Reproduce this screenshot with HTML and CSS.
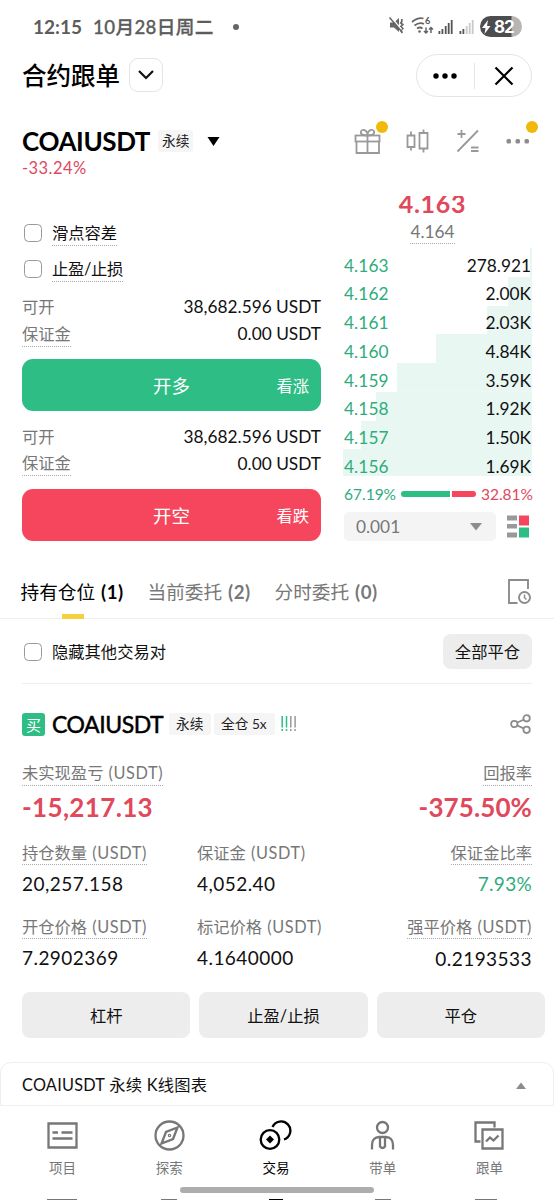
FILE: index.html
```html
<!DOCTYPE html>
<html lang="zh-CN">
<head>
<meta charset="utf-8">
<title>合约跟单</title>
<link rel="stylesheet" href="styles.css">
</head>
<body>
<div class="screen">
  <div class="status">
    <span class="clock">12:15</span><span class="date">10月28日周二</span><i class="status-dot"></i>
    <svg class="status-icons" width="136" height="24" viewBox="0 0 136 24">
      <g fill="#666"><path d="M3 9.500h4l5-4.500v14l-5-4.500H3z"/><path d="M14.800 6v2.500l-1 1.500 2 1.500-2 2 2 2-2 2 1.500 2.500" fill="none" stroke="#666" stroke-width="1.700"/></g>
      <path d="M3.500 3.500l11 13" stroke="#fff" stroke-width="1.500"/><path d="M2.500 4.500l12.500 14.500" stroke="#666" stroke-width="1.500"/>
      <g fill="none" stroke="#666" stroke-width="1.800"><path d="M25 9q6-5 11.500-3.500M27.500 12.500q5-4 9.500-1.500M30 15.500q3-2 5.500 0"/><path d="M39 14.500v5.500M37 18l2 2 2-2M44 20v-5.500M42 16.500l2-2 2 2" stroke-width="1.500"/></g>
      <circle cx="32.500" cy="18.500" r="1.300" fill="#666"/>
      <text x="38" y="11" class="wifi-gen">6</text>
      <g fill="#555"><path d="M51.500 18h1.800v3h-1.800zM54.500 16h1.800v5h-1.800zM57.800 13h1.800v8h-1.800zM60.800 10h1.800v11h-1.800zM63.800 7h1.800v14h-1.800z"/><path d="M72.500 18h1.800v3h-1.800zM75.500 16h1.800v5h-1.800z"/></g>
      <path d="M78.800 13h1.800v8h-1.800zM81.800 10h1.800v11h-1.800zM84.800 7h1.800v14h-1.800z" fill="#c9c9c9"/>
      <path d="M103.500 3h22v21h-22a10.500 10.500 0 0 1 0-21z" fill="#4d4d4d"/><path d="M124.500 3a10.500 10.500 0 0 1 0 21z" fill="#b5b5b5"/>
      <path d="M101 7l-6 8h3.500l-1 6 6-8h-3.500z" fill="#fff"/>
      <text x="107" y="20" class="battery">82</text>
    </svg>
  </div>

  <div class="header">
    <h1>合约跟单</h1>
    <span class="drop"><svg width="18" height="12" viewBox="0 0 18 12"><path d="M2 2l7 7 7-7" fill="none" stroke="#111" stroke-width="2.200"/></svg></span>
    <span class="capsule">
      <svg width="116" height="42" viewBox="0 0 116 42"><g fill="#000"><circle cx="19" cy="21" r="2.700"/><circle cx="28" cy="21" r="2.700"/><circle cx="37" cy="21" r="2.700"/></g><path d="M57.500 8v26" stroke="#e4e4e4"/><path d="M78.500 12.500l17 17M95.500 12.500l-17 17" stroke="#000" stroke-width="2.200"/></svg>
    </span>
  </div>

  <div class="pair">
    <div class="pair-info">
      <div class="pair-name"><b>COAIUSDT</b><span class="tag">永续</span><svg width="13" height="9" viewBox="0 0 13 9"><path d="M.5 0h12l-6 9z" fill="#000"/></svg></div>
      <div class="change">-33.24%</div>
    </div>
    <svg class="tools" width="188" height="42" viewBox="0 0 188 42" fill="none" stroke="#999" stroke-width="1.800">
      <g><rect x="5.500" y="15.500" width="24" height="6"/><path d="M6.500 21.500v11.500h22.500v-11.500M17.500 15.500v17.500M17.500 15.500c-4 0-7.500-1-6.500-4 1-3 6.500-2 6.500 4c0-6 5.500-7 6.500-4s-2.500 4-6.500 4"/></g>
      <path d="M57.500 15.500h7v11.500h-7zM61 11.500v4M61 27v3.500M69.500 13h8v15.500h-8zM73.500 9.500v3.500M73.500 28.500v4"/>
      <path d="M107.500 31.500l20.500-21M107.500 14h8M111.500 10v8M121 27.500h7.500M121 31h7.500"/>
      <g fill="#8c8c8c" stroke="none"><rect x="156.500" y="19" width="4.500" height="4.500" rx="1.500"/><rect x="165.500" y="19" width="4.500" height="4.500" rx="1.500"/><rect x="174.500" y="19" width="4.500" height="4.500" rx="1.500"/></g>
      <g fill="#f0b90b" stroke="none"><circle cx="32" cy="7" r="6"/><circle cx="182" cy="7" r="6"/></g>
    </svg>
  </div>

  <div class="trade">
    <div class="form">
      <div class="check first"><i class="box"></i><span class="dotted">滑点容差</span></div>
      <div class="check"><i class="box"></i><span class="dotted slash">止盈/止损</span></div>
      <div class="kv top"><span>可开</span><em>38,682.596 USDT</em></div>
      <div class="kv"><span class="dotted">保证金</span><em>0.00 USDT</em></div>
      <div class="order buy"><span>开多</span><small>看涨</small></div>
      <div class="kv second"><span>可开</span><em>38,682.596 USDT</em></div>
      <div class="kv"><span class="dotted">保证金</span><em>0.00 USDT</em></div>
      <div class="order sell"><span>开空</span><small>看跌</small></div>
    </div>
    <div class="book">
      <div class="last"><b>4.163</b></div>
      <div class="mark"><span class="dotted">4.164</span></div>
      <div class="rows">
        <div class="row" style="--w:2px"><span>4.163</span><em>278.921</em></div>
        <div class="row" style="--w:24px"><span>4.162</span><em>2.00K</em></div>
        <div class="row" style="--w:45px"><span>4.161</span><em>2.03K</em></div>
        <div class="row" style="--w:96px"><span>4.160</span><em>4.84K</em></div>
        <div class="row" style="--w:135px"><span>4.159</span><em>3.59K</em></div>
        <div class="row" style="--w:156px"><span>4.158</span><em>1.92K</em></div>
        <div class="row" style="--w:171px"><span>4.157</span><em>1.50K</em></div>
        <div class="row" style="--w:189px"><span>4.156</span><em>1.69K</em></div>
      </div>
      <div class="ratio"><span class="up">67.19%</span><i class="bar-up"></i><i class="bar-down"></i><span class="down">32.81%</span></div>
      <div class="depth">
        <div class="select"><span>0.001</span><svg width="12" height="8" viewBox="0 0 12 8"><path d="M0 0h12l-6 7.500z" fill="#8c8c8c"/></svg></div>
        <svg width="23" height="23" viewBox="0 0 23 23"><path d="M0 .5h10v5H0zM0 9h10v4.500H0zM0 17.500h10v5H0z" fill="#999"/><path d="M12 .5h10v10H12z" fill="#f6465d"/><path d="M12 12.500h10v10H12z" fill="#2ebd85"/></svg>
      </div>
    </div>
  </div>

  <div class="tabs">
    <span class="tab active">持有仓位 <b>(1)</b></span><span class="tab">当前委托 <b>(2)</b></span><span class="tab">分时委托 <b>(0)</b></span>
    <svg class="history" width="26" height="28" viewBox="0 0 26 28" fill="none" stroke="#8c8c8c" stroke-width="1.900"><path d="M10.500 25H2V2h19v9"/><circle cx="17.500" cy="19.500" r="5.500"/><path d="M17.500 16.500v3.200l2 1.800" stroke-width="1.500"/></svg>
  </div>

  <div class="filter">
    <div class="check"><i class="box"></i><span>隐藏其他交易对</span></div>
    <span class="close-all">全部平仓</span>
  </div>

  <div class="position">
    <div class="pos-head">
      <span class="side">买</span><b>COAIUSDT</b><span class="tag t1">永续</span><span class="tag t2">全仓 5x</span>
      <svg class="risk" width="16" height="16" viewBox="0 0 16 16" stroke-width="1.500" stroke-dasharray="11.500 1.500 2 9"><path d="M1.200 0v16M5.500 0v16" stroke="#2ebd85"/><path d="M9.800 0v16M14.100 0v16" stroke="#999"/></svg>
      <svg class="share" width="22" height="22" viewBox="0 0 22 22" fill="none" stroke="#8c8c8c" stroke-width="1.800"><circle cx="4.300" cy="11" r="3.200"/><circle cx="16.600" cy="5.300" r="3.200"/><circle cx="16.600" cy="16.800" r="3.200"/><path d="M7.300 9.500l6.300-2.800M7.300 12.500l6.300 2.900"/></svg>
    </div>
    <div class="pnl">
      <div><span class="label dotted">未实现盈亏 <span class="unit">(USDT)</span></span><strong>-15,217.13</strong></div>
      <div class="right"><span class="label dotted">回报率</span><strong class="roi">-375.50%</strong></div>
    </div>
    <div class="stats">
      <div><span class="label dotted">持仓数量 <span class="unit">(USDT)</span></span><em>20,257.158</em></div>
      <div><span class="label">保证金 <span class="unit">(USDT)</span></span><em>4,052.40</em></div>
      <div class="right"><span class="label dotted">保证金比率</span><em class="up">7.93%</em></div>
    </div>
    <div class="stats">
      <div><span class="label dotted">开仓价格 <span class="unit">(USDT)</span></span><em>7.2902369</em></div>
      <div><span class="label">标记价格 <span class="unit">(USDT)</span></span><em>4.1640000</em></div>
      <div class="right liq"><span class="label dotted">强平价格 <span class="unit">(USDT)</span></span><em>0.2193533</em></div>
    </div>
    <div class="actions"><span>杠杆</span><span>止盈/止损</span><span>平仓</span></div>
  </div>

  <div class="chart-bar"><span>COAIUSDT 永续 K线图表</span><svg width="10" height="7" viewBox="0 0 10 7"><path d="M0 7h10L5 .5z" fill="#8c8c8c"/></svg></div>

  <div class="nav">
    <div class="item"><svg viewBox="0 0 32 32"><path d="M2 3.500h28v24H2zM6 12.500h5.500M15 12.500h11M6 18.500h20"/></svg><span>项目</span></div>
    <div class="item"><svg viewBox="0 0 32 32"><circle cx="16" cy="15.500" r="14"/><path d="M24 7.500l-4.500 11.500L8 23.500l4.500-11.500z"/><circle cx="16" cy="15.500" r=".6"/></svg><span>探索</span></div>
    <div class="item on"><svg viewBox="0 0 32 32"><circle cx="10.500" cy="19.500" r="9.300"/><path d="M13 7A9.300 9.300 0 1 1 24.500 19.500"/><path d="M10.500 15.500l4 4-4 4-4-4z" fill="#000" stroke="none"/></svg><span>交易</span></div>
    <div class="item"><svg viewBox="0 0 32 32"><circle cx="16" cy="7.500" r="5.500"/><path d="M5.500 29.500V25c0-5 3-8 7-8h7c4 0 7 3 7 8v4.500M13.500 17v9.500q2.500 3 5 0V17"/></svg><span>带单</span></div>
    <div class="item"><svg viewBox="0 0 32 32"><path d="M7 21.500H2V2.500h19v5M9 9.500h20v19H9zM12.500 21.500l4-4 3.500 3 5-5"/></svg><span>跟单</span></div>
    <i class="home"></i>
  </div>
  <div class="nav-edge"><i class="e1"></i><i class="e2"></i><i class="e3"></i><i class="e4"></i><i class="e5"></i></div>
</div>
</body>
</html>
```
FILE: styles.css
```css
* { box-sizing: border-box; }
body { margin: 0; background: #fff; }
.screen { width: 554px; height: 1200px; overflow: hidden; background: #fff; color: #111; font: 16.3px/24px Lato, "Noto Sans CJK SC", sans-serif; white-space: nowrap; }
em, i, small { font-style: normal; }
svg { display: block; flex: none; }
h1 { margin: 0; }
.up { color: #2eac7c; }
.down { color: #e0485c; }
.dotted { border-bottom: 1.500px dotted #aaa; }

.status { height: 48px; padding: 5px 31px 0 33px; display: flex; align-items: center; color: #5c5c5c; font-size: 19px; font-weight: 700; }
.clock { width: 60px; }
.date { font-weight: 500; font-size: 18.700px; letter-spacing: .35px; -webkit-text-stroke: .3px #5c5c5c; }
.status-dot { width: 6px; height: 6px; border-radius: 50%; background: #666; margin-left: 19px; }
.status-icons { margin-left: auto; position: relative; top: -2px; }
.wifi-gen { font: 700 9px Lato, sans-serif; fill: #555; }
.battery { font: 700 17px Inter, sans-serif; fill: #fff; letter-spacing: -1px; }

.header { height: 54px; padding: 0 22px; display: flex; align-items: center; }
h1 { font-size: 24.500px; font-weight: 500; line-height: 34px; color: #000; padding-top: 2px; }
.drop { width: 34px; height: 34px; margin-left: 9px; border: 1px solid #e4e4e4; border-radius: 9px; display: grid; place-items: center; }
.capsule { margin-left: auto; border: 1px solid #e4e4e4; border-radius: 22px; width: 116px; height: 43px; display: grid; place-items: center; }

.pair { height: 93px; padding: 18px 16px 0 22px; display: flex; justify-content: space-between; }
.pair-name { height: 42px; display: flex; align-items: center; }
.pair-name b { font-size: 26px; font-weight: 700; letter-spacing: -.4px; width: 136px; color: #000; }
.tag { font-size: 13.700px; line-height: 22px; height: 22px; padding: 0 4px; border-radius: 3px; background: #f5f5f5; color: #222; }
.pair-name svg { margin-left: 14px; }
.change { font-size: 16.500px; line-height: 20px; color: #e0485c; margin-top: -4px; letter-spacing: .45px; }

.trade { height: 355px; display: flex; padding: 0 22px; gap: 22px; }
.form { width: 299px; }
.check { display: flex; align-items: center; height: 36.500px; padding: 1px 0 0 2px; }
.check.first { margin-top: 19px; padding-top: 2px; }
.slash { letter-spacing: -.3px; }
.box { width: 18px; height: 18px; border: 1.500px solid #999; border-radius: 4.500px; margin: -1px 10px 0 0; }
.kv { display: flex; justify-content: space-between; align-items: center; height: 27px; color: #777; }
.kv.top { margin-top: 6.500px; }
.kv.second { margin-top: 12.500px; }
.kv em { color: #111; font-size: 17.300px; }
.order { height: 52px; border-radius: 11px; margin-top: 11px; color: #fff; display: grid; grid-template-columns: 1fr auto 1fr; align-items: center; padding: 2px 12px 0; font-size: 18.500px; }
.order span { grid-column: 2; }
.order small { font-size: 16.300px; text-align: right; }
.buy { background: #2ebd85; }
.sell { background: #f6465d; margin-top: 11.500px; }

.book { width: 189px; }
.last { height: 19px; margin-top: 1px; padding-right: 10px; overflow: hidden; display: flex; justify-content: center; align-items: flex-end; font-size: 25px; line-height: 24px; color: #e0485c; letter-spacing: .7px; }
.mark { height: 33px; padding: 5px 10px 0 0; text-align: center; color: #777; font-size: 17.300px; }
.mark .dotted { display: inline-block; line-height: 23px; }
.rows { height: 228px; overflow: hidden; }
.row { display: flex; justify-content: space-between; height: 28.750px; padding: 5.500px 1px 0; font-size: 17.300px; background: linear-gradient(#e8f7f1, #e8f7f1) right / var(--w) 100% no-repeat; }
.row span { color: #2eac7c; letter-spacing: .1px; }
.ratio { display: flex; align-items: center; height: 36px; font-size: 15.500px; padding-left: 1px; }
.ratio span:first-child { width: 57px; }
.ratio i { height: 6px; }
.bar-up { width: 49px; background: #2ebd85; border-radius: 3px 0 0 3px; }
.bar-down { width: 24px; margin-left: 2px; background: #f6465d; border-radius: 0 3px 3px 0; }
.ratio .down { margin-left: auto; margin-right: -1px; }
.depth { display: flex; align-items: center; justify-content: space-between; padding: 0 2px 0 1px; }
.select { width: 152px; height: 29px; border-radius: 5px; background: #f4f4f4; color: #777; display: flex; justify-content: space-between; align-items: center; padding: 0 14px 0 12px; font-size: 17.300px; }

.tabs { height: 69px; padding: 15px 21px 0 20.500px; display: flex; align-items: center; border-bottom: 1px solid #eee; font-size: 18.700px; color: #777; }
.tab { width: 127px; height: 54px; line-height: 54px; position: relative; }
.tab b { font-weight: 700; letter-spacing: .5px; margin-left: 1px; }
.active { color: #000; }
.active::after { content: ""; position: absolute; left: 41px; bottom: 0; width: 22px; height: 5px; background: #f4d13d; }
.history { margin-left: auto; }

.filter { height: 65px; margin: 0 22px; border-bottom: 1px solid #eee; display: flex; align-items: center; justify-content: space-between; }
.filter .check { padding-top: 2px; }
.close-all { height: 35px; line-height: 36px; padding: 0 12px; border-radius: 8px; background: #ededed; }

.position { height: 378px; padding: 0 22px; }
.pos-head { height: 77px; padding-top: 3px; display: flex; align-items: center; }
.side { width: 23px; height: 23px; line-height: 25px; border-radius: 3px; background: #2ebd85; color: #fff; font-size: 15px; text-align: center; }
.pos-head b { font-weight: 400; font-size: 23px; margin-left: 7px; width: 117px; color: #000; -webkit-text-stroke: .5px #000; letter-spacing: -.45px; }
.t1 { padding: 0 7px; width: 42px; }
.t2 { margin-left: 3px; padding: 0 7px; width: 61px; }
.risk { margin-left: 6px; }
.share { margin-left: auto; }
.label { display: inline-block; height: 24px; line-height: 22px; color: #777; }
.unit { letter-spacing: .6px; margin-left: 1px; }
.right { text-align: right; }
.pnl { display: flex; justify-content: space-between; height: 81px; }
.pnl strong { display: block; font-size: 26px; line-height: 43px; color: #e0485c; letter-spacing: .35px; }
.pnl .roi { letter-spacing: .1px; }
.stats { display: grid; grid-template-columns: 175px 1fr auto; height: 73.500px; }
.stats .label { vertical-align: top; height: 23px; }
.stats em { display: block; font-size: 19px; line-height: 35px; letter-spacing: .45px; }
.stats .up { letter-spacing: .3px; }
.stats .liq em { line-height: 38px; }
.actions { display: flex; gap: 9px; width: 523px; margin-top: 3px; }
.actions span { flex: 1; height: 46px; line-height: 48px; border-radius: 8px; background: #ededed; text-align: center; }

.chart-bar { height: 44px; border: 1px solid #eee; border-radius: 11px 11px 0 0; padding: 2px 27px 0 21px; display: flex; align-items: center; justify-content: space-between; letter-spacing: .25px; }
.nav { height: 92px; padding: 14px 11px 0 9px; display: grid; grid-template-columns: repeat(5, 1fr); position: relative; }
.item { display: flex; flex-direction: column; align-items: center; color: #777; font-size: 13.500px; line-height: 20px; gap: 6px; }
.item svg { width: 33px; height: 32px; fill: none; stroke: #777; stroke-width: 2.300; }
.on { color: #000; }
.on svg { stroke: #000; }
.home { position: absolute; left: 180px; top: 81px; width: 194px; height: 6px; border-radius: 3px; background: #adadad; }
.nav-edge { height: 3px; padding: 1px 11px 0 9px; display: grid; grid-template-columns: repeat(5, 1fr); justify-items: center; }
.nav-edge i { width: 30px; height: 2px; background: #777; }
.nav-edge .e2, .nav-edge .e4 { width: 16px; }
.nav-edge .e3 { width: 14px; background: #000; }
.nav-edge .e5 { width: 22px; margin-right: 8px; }
```
